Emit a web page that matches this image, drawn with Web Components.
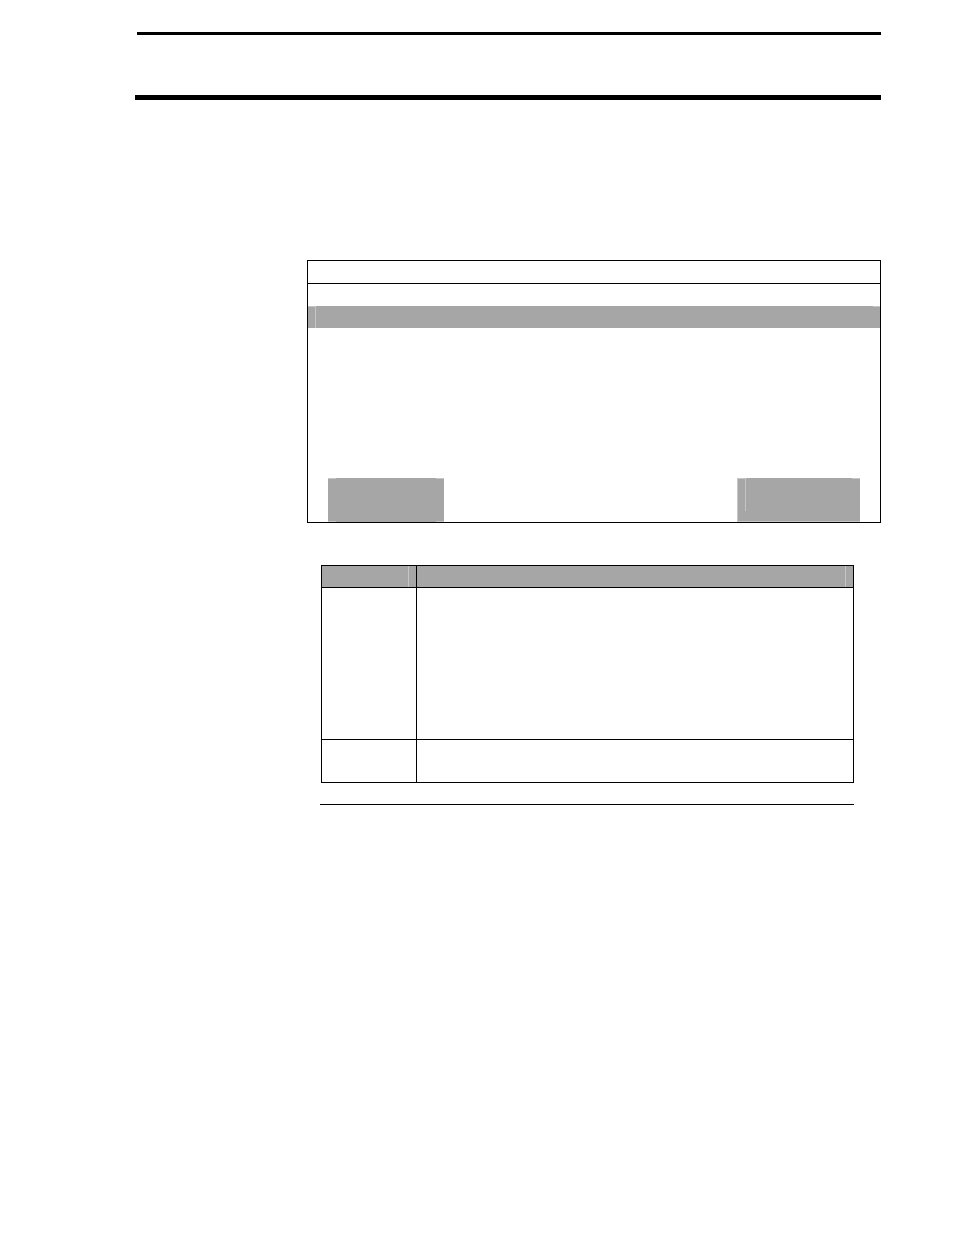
<!DOCTYPE html>
<html lang="en">
<head>
<meta charset="utf-8">
<meta name="viewport" content="width=device-width, initial-scale=1">
<title>Page</title>
<style>
body {
  margin: 0;
  background: #fff;
  font-family: "Liberation Sans", sans-serif;
  --ink: #000;
  --shade: #a6a6a6;
  --seam: #c6c6c6;
}
</style>
</head>
<body>
<manual-page>
  <page-header slot="header"></page-header>
  <device-screen>
    <soft-key slot="keys"></soft-key>
    <soft-key slot="keys" seamed></soft-key>
  </device-screen>
  <field-table></field-table>
</manual-page>

<script>
class BaseElement extends HTMLElement {
  constructor() {
    super();
    const shadow = this.attachShadow({ mode: "open" });
    shadow.innerHTML = `<style>${this.css}</style>${this.html}`;
  }
}

class ManualPage extends BaseElement {
  get css() {
    return `
:host {
  display: block;
  padding: 32px 73px 64px 135px;
}
main {
  margin: 160px 0 0 172px;
}`;
  }
  get html() {
    return `<slot name="header"></slot><main><slot></slot></main>`;
  }
}

class PageHeader extends BaseElement {
  get css() {
    return `
:host {
  display: block;
}
header {
  display: flex;
  flex-direction: column;
  gap: 60px;
}
.thin {
  height: 3px;
  margin-left: 2px;
  background: var(--ink);
}
.thick {
  height: 5px;
  background: var(--ink);
}`;
  }
  get html() {
    return `<header><div class="thin"></div><div class="thick"></div></header>`;
  }
}

class DeviceScreen extends BaseElement {
  get css() {
    return `
:host {
  display: block;
  border: 1px solid var(--ink);
}
.title {
  height: 22px;
  border-bottom: 1px solid var(--ink);
}
.line {
  height: 22px;
}
/* selected line, lighter where the cell padding meets the text */
.selected {
  background:
    linear-gradient(var(--seam), var(--seam)) 0 0 / 8px 1px no-repeat,
    linear-gradient(var(--seam), var(--seam)) 100% 0 / 7px 1px no-repeat,
    linear-gradient(var(--seam), var(--seam)) 7px 0 / 1px 100% no-repeat,
    var(--shade);
}
.body {
  height: 150px;
}
.keys {
  display: flex;
  justify-content: space-between;
  padding: 0 20px;
}`;
  }
  get html() {
    return `
<div class="title"></div>
<div class="line"></div>
<div class="line selected"></div>
<div class="body"></div>
<div class="keys"><slot name="keys"></slot></div>`;
  }
}

class SoftKey extends BaseElement {
  get css() {
    return `
:host {
  --line: linear-gradient(var(--seam), var(--seam));
  display: block;
  width: 116px;
  height: 44px;
  background:
    var(--line) 0 0 / 8px 1px no-repeat,
    var(--line) 100% 0 / 8px 1px no-repeat,
    var(--line) 0 100% / 8px 1px no-repeat,
    var(--line) 100% 100% / 8px 1px no-repeat,
    var(--shade);
}
:host([seamed]) {
  width: 123px;
  background:
    var(--line) 0 0 / 8px 1px no-repeat,
    var(--line) 100% 0 / 8px 1px no-repeat,
    var(--line) 0 0 / 1px 100% no-repeat,
    var(--line) 8px 0 / 1px 33px no-repeat,
    var(--line) 0 100% / 100% 1px no-repeat,
    var(--shade);
}`;
  }
  get html() {
    return `<slot></slot>`;
  }
}

class FieldTable extends BaseElement {
  get css() {
    return `
:host {
  display: block;
  margin: 42px 27px 0 13px;
  padding-bottom: 21px;
  border-bottom: 1px solid var(--ink);
}
.frame {
  padding-left: 1px;
}
table {
  width: 100%;
  table-layout: fixed;
  border-collapse: separate;
  border-spacing: 0;
  border: solid var(--ink);
  border-width: 1px 0 0 1px;
}
th, td {
  box-sizing: border-box;
  padding: 0;
  border: solid var(--ink);
  border-width: 0 1px 1px 0;
}
th {
  height: 22px;
  background:
    linear-gradient(var(--seam), var(--seam)) right 7px top 0 / 1px 100% no-repeat,
    var(--shade);
}
th:first-child {
  width: 95px;
}
.tall td {
  height: 152px;
}
.short td {
  height: 43px;
}`;
  }
  get html() {
    return `
<div class="frame">
<table>
  <thead>
    <tr><th scope="col"></th><th scope="col"></th></tr>
  </thead>
  <tbody>
    <tr class="tall"><td></td><td></td></tr>
    <tr class="short"><td></td><td></td></tr>
  </tbody>
</table>
</div>`;
  }
}

customElements.define("manual-page", ManualPage);
customElements.define("page-header", PageHeader);
customElements.define("device-screen", DeviceScreen);
customElements.define("soft-key", SoftKey);
customElements.define("field-table", FieldTable);
</script>
</body>
</html>
